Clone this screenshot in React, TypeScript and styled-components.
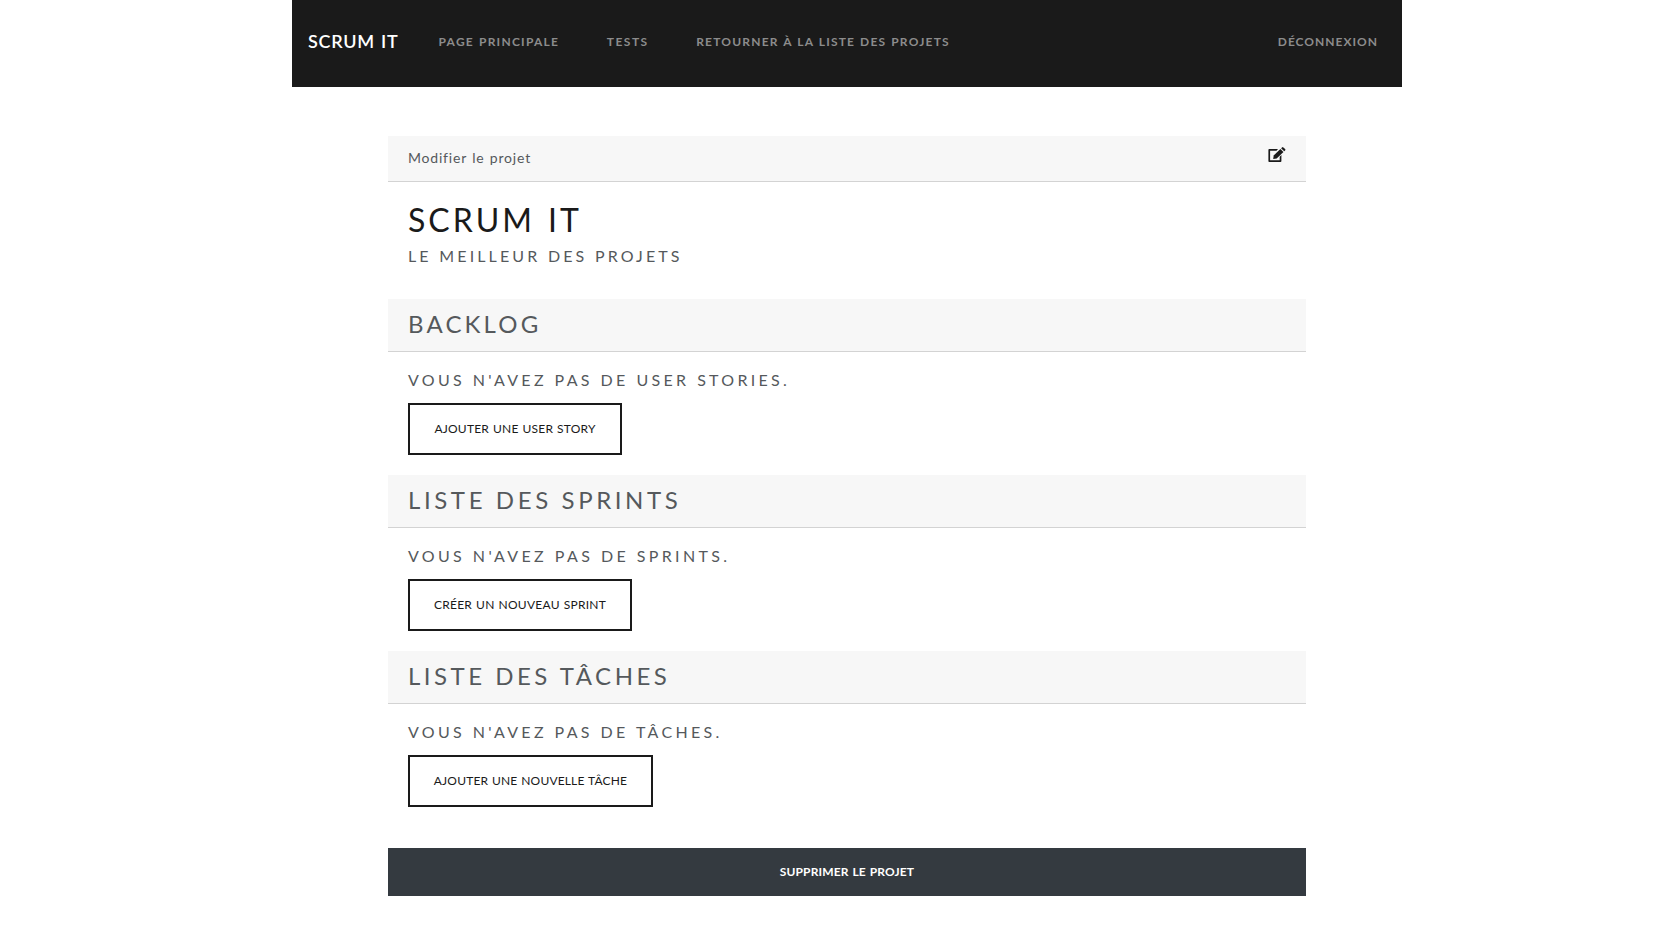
import React from 'react';
import styled, { createGlobalStyle } from 'styled-components';

const GlobalStyle = createGlobalStyle`
  *, *::before, *::after { box-sizing: border-box; }
  body {
    margin: 0;
    background: #fff;
    color: #55595c;
    font-family: Lato, "Liberation Sans", sans-serif;
    font-size: 14px;
    line-height: 1.5;
  }
  h1, h2, h3, p { margin: 0; font-weight: 400; }
`;

interface Spaced { $spacing: number }

const Container = styled.div`
  width: 1110px;
  margin-left: 292px;
`;

const Navbar = styled.nav`
  display: flex;
  align-items: center;
  height: 87px;
  padding: 0 16px 3px;
  background: #1a1a1a;
`;

const Brand = styled.a`
  width: 107px;
  padding-bottom: 2px;
  color: #fff;
  font-size: 18px;
  font-weight: 600;
  letter-spacing: 0.69px;
  word-spacing: 1.2px;
  white-space: nowrap;
`;

const NavLinks = styled.div`
  display: flex;
  flex: 1;
`;

const NavLink = styled.a<Spaced>`
  padding: 0 24px 0 23.5px;
  color: #8c8c8c;
  font-size: 12px;
  font-weight: 700;
  letter-spacing: ${p => p.$spacing}px;
  word-spacing: 0.8px;
  white-space: nowrap;
`;

const SignOut = styled(NavLink)`
  padding-right: 8px;
`;

const Card = styled.main`
  width: 918px;
  margin: 49px 0 0 96px;
`;

const EditBar = styled.header`
  display: flex;
  justify-content: space-between;
  height: 46px;
  padding: 11px 20px 0;
  background: #f7f7f7;
  border-bottom: 1px solid #d3d3d3;
  letter-spacing: 0.8px;
  word-spacing: 1px;
`;

const EditIcon = styled.svg`
  width: 18px;
  height: 15px;
  fill: #1a1a1a;
`;

const Intro = styled.section`
  height: 117px;
  padding: 18px 20px 0;
`;

const Title = styled.h1`
  margin-bottom: 6px;
  color: #1a1a1a;
  font-size: 32px;
  line-height: 40px;
  letter-spacing: 3px;
  word-spacing: 2px;
`;

const Subtitle = styled.h3<Spaced>`
  font-size: 16px;
  line-height: 20px;
  letter-spacing: ${p => p.$spacing}px;
  word-spacing: 0.4px;
`;

const SectionHeader = styled.header`
  height: 53px;
  padding: 11px 20px 0;
  background: #f7f7f7;
  border-bottom: 1px solid #d3d3d3;
`;

const SectionTitle = styled.h2<Spaced>`
  font-size: 24px;
  line-height: 28px;
  letter-spacing: ${p => p.$spacing}px;
  word-spacing: 0;
`;

const SectionBody = styled.div`
  height: 123px;
  padding: 18px 20px 0;
`;

const ActionButton = styled.button<Spaced & { $width: number }>`
  display: block;
  width: ${p => p.$width}px;
  height: 52px;
  margin-top: 13px;
  padding: 0 0 2px;
  background: #fff;
  border: 2px solid #1a1a1a;
  color: #1a1a1a;
  font: 400 12px Lato, "Liberation Sans", sans-serif;
  letter-spacing: ${p => p.$spacing}px;
  word-spacing: 0.6px;
`;

const DeleteButton = styled.button`
  width: 100%;
  height: 48px;
  margin-top: 21px;
  padding: 0 0 2px;
  background: #343a40;
  border: 0;
  color: #fff;
  font: 700 12px Lato, "Liberation Sans", sans-serif;
  letter-spacing: 0.14px;
  word-spacing: 0.8px;
`;

const sections = [
  { title: 'BACKLOG', titleSpacing: 3.15, text: "VOUS N'AVEZ PAS DE USER STORIES.", textSpacing: 3.3, action: 'AJOUTER UNE USER STORY', actionSpacing: 0.22, width: 214 },
  { title: 'LISTE DES SPRINTS', titleSpacing: 3.6, text: "VOUS N'AVEZ PAS DE SPRINTS.", textSpacing: 3.32, action: 'CRÉER UN NOUVEAU SPRINT', actionSpacing: 0.26, width: 224 },
  { title: 'LISTE DES TÂCHES', titleSpacing: 3.5, text: "VOUS N'AVEZ PAS DE TÂCHES.", textSpacing: 3.3, action: 'AJOUTER UNE NOUVELLE TÂCHE', actionSpacing: 0.17, width: 245 },
];

export default function App() {
  return (
    <Container>
      <GlobalStyle />
      <Navbar>
        <Brand>SCRUM IT</Brand>
        <NavLinks>
          <NavLink $spacing={1.25}>PAGE PRINCIPALE</NavLink>
          <NavLink $spacing={1.5}>TESTS</NavLink>
          <NavLink $spacing={1.2}>RETOURNER À LA LISTE DES PROJETS</NavLink>
        </NavLinks>
        <SignOut $spacing={1}>DÉCONNEXION</SignOut>
      </Navbar>
      <Card>
        <EditBar>
          <span>Modifier le projet</span>
          <EditIcon viewBox="0 0 18 15">
            <path d="M1.2 2H10L8.5 3.7H2.1V13.3H11.7V9.7L13.4 8V14.1Q13.4 15 12.5 15H1.2Q.4 15 .4 14.1V2.9Q.4 2 1.2 2Z" />
            <path d="M12.4 1.9 15.5 5 8.7 11.4 5.2 12 5.7 8.6Z" />
            <path d="M13.1 1.2 14 .4Q14.7-.2 15.4.4L17.1 2.1Q17.7 2.8 17.1 3.5L16.2 4.3Z" />
          </EditIcon>
        </EditBar>
        <Intro>
          <Title>SCRUM IT</Title>
          <Subtitle $spacing={3.12}>LE MEILLEUR DES PROJETS</Subtitle>
        </Intro>
        {sections.map(s => (
          <section key={s.title}>
            <SectionHeader>
              <SectionTitle $spacing={s.titleSpacing}>{s.title}</SectionTitle>
            </SectionHeader>
            <SectionBody>
              <Subtitle $spacing={s.textSpacing}>{s.text}</Subtitle>
              <ActionButton $spacing={s.actionSpacing} $width={s.width}>{s.action}</ActionButton>
            </SectionBody>
          </section>
        ))}
        <DeleteButton>SUPPRIMER LE PROJET</DeleteButton>
      </Card>
    </Container>
  );
}
